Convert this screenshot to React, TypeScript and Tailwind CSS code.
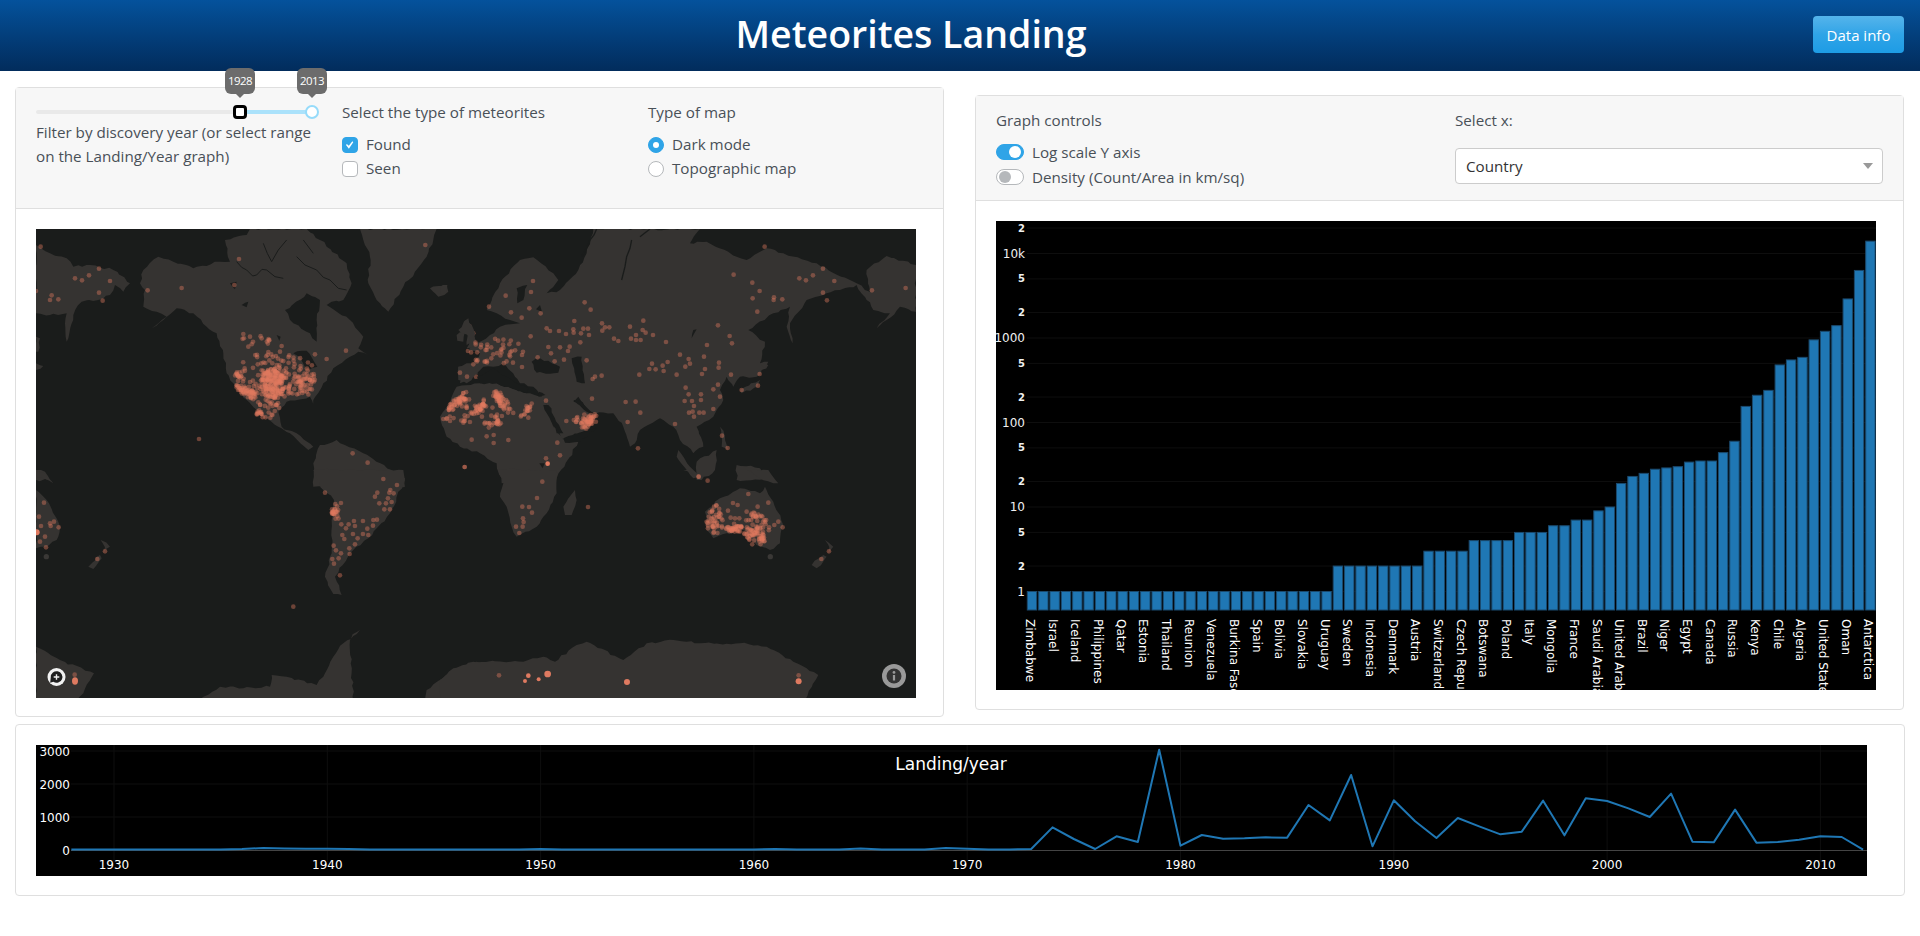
import React from 'react';

const LAND = '#353331';
const OCEAN = '#1a1c1b';
const DOT = '#df7a60';

// seeded so the scatter stays the same between runs
const seeded = (seed: number) => () => {
  seed = (seed * 16807) % 2147483647;
  return seed / 2147483647;
};

type Cluster = [number, number, number, number, number];

const scatter = (clusters: Cluster[], seed: number) => {
  const rnd = seeded(seed);
  const out: number[][] = [];
  clusters.forEach(([cx, cy, rx, ry, n]) => {
    for (let i = 0; i < n; i++) {
      const a = rnd() * Math.PI * 2;
      const r = Math.sqrt(rnd());
      out.push([cx + Math.cos(a) * r * rx, cy + Math.sin(a) * r * ry]);
    }
  });
  return out;
};

const parse = (points: string) => points.trim().split(/\s+/).map((p) => p.split(',').map(Number));

// dense dots along a line, overlapping into one solid patch
const trail = (points: string, n: number, spread: number, seed: number) => {
  const rnd = seeded(seed);
  const pts = parse(points);
  const out: number[][] = [];
  for (let i = 0; i < n; i++) {
    const t = rnd() * (pts.length - 1);
    const k = Math.min(Math.floor(t), pts.length - 2);
    const f = t - k;
    out.push([
      pts[k][0] + (pts[k + 1][0] - pts[k][0]) * f + (rnd() - 0.5) * spread,
      pts[k][1] + (pts[k + 1][1] - pts[k][1]) * f + (rnd() - 0.5) * spread,
    ]);
  }
  return out;
};

// breaks long edges up so the coasts are not straight
const rough = (points: string, seed: number) => {
  const rnd = seeded(seed);
  const pts = parse(points);
  const out: string[] = [];
  pts.forEach((p, i) => {
    const q = pts[(i + 1) % pts.length];
    const steps = Math.max(1, Math.round(Math.hypot(q[0] - p[0], q[1] - p[1]) / 14));
    for (let s = 0; s < steps; s++) {
      const j = s === 0 ? 0 : 7;
      const x = p[0] + ((q[0] - p[0]) * s) / steps + (rnd() - 0.5) * j;
      const y = p[1] + ((q[1] - p[1]) * s) / steps + (rnd() - 0.5) * j;
      out.push(`${x.toFixed(1)},${y.toFixed(1)}`);
    }
  });
  return out.join(' ');
};

const Shape = ({ points }: { points: string }) => <polygon points={rough(points, points.length * 97 + 13)} />;

const Dots = ({ pts }: { pts: number[][] }) => (
  <g fill={DOT} fillOpacity={0.42}>
    {pts.map(([x, y], i) => (
      <circle key={i} cx={x} cy={y} r={7} />
    ))}
  </g>
);

const nwDots = [[32,80],[627,117],[1186,75],[207,146],[177,166],[135,175],[156,181],[240,183],[353,211],[455,204],[207,218],[65,226],[60,240],[85,238],[218,242],[18,213],[613,195],[507,657],[968,700],[1013,728],[1060,775],[1304,741],[1325,659],[1370,650],[640,342],[660,350],[695,355],[655,380],[755,378],[750,395],[855,403],[890,417],[948,392],[1318,318],[1330,340],[1328,368],[1314,393],[1345,385],[1290,458],[1338,470]];
const neDots = [[279,183],[273,216],[197,227],[147,260],[213,277],[268,265],[245,293],[302,280],[434,247],[452,269],[403,303],[486,310],[610,302],[570,320],[508,322],[495,322],[487,332],[608,330],[617,338],[639,345],[320,325],[330,333],[357,333],[378,342],[400,328],[401,338],[423,340],[430,326],[444,326],[447,345],[421,367],[272,349],[522,356],[535,363],[573,356],[588,345],[588,360],[602,360],[678,366],[834,316],[869,348],[876,370],[801,375],[881,164],[937,188],[959,213],[938,235],[1002,232],[1001,240],[1027,238],[952,275],[974,80],[1078,175],[1098,181],[1119,166],[1149,146],[1183,183],[1149,218],[1161,241],[1296,211],[1397,204],[720,404],[746,417],[792,410],[750,431],[736,440],[795,447],[837,428],[836,443],[786,462],[873,464],[683,426],[636,431],[628,447],[647,448],[668,437],[671,453],[710,464],[598,464],[485,467],[465,470],[458,477],[440,421],[372,419],[344,424],[293,412],[325,381],[360,382],[389,380],[384,393],[333,400],[246,441],[219,428],[737,503],[746,523],[783,523],[783,540],[734,543],[756,543],[762,558],[820,508],[840,530],[834,494],[820,567],[747,578],[758,575],[778,578],[791,578],[762,590],[705,612],[601,578],[587,545],[557,546],[563,606],[456,536],[594,685],[846,647],[863,684],[905,510],[954,497],[959,462],[776,770],[74,741],[95,659],[140,649],[161,645],[161,669],[205,660],[352,668],[360,706],[318,715],[379,603],[60,458],[81,470],[100,433],[318,542],[265,593],[10,597],[30,603]];
const swDots = [[1060,27],[1101,45],[1042,68],[1035,80],[1081,60],[1078,68],[1091,70],[1074,85],[1085,96],[1048,100],[1068,100],[1063,118],[1080,118],[885,68],[916,102],[933,99],[934,163],[972,153],[999,153],[1030,150],[1041,149],[1029,167],[1012,176],[1015,195],[999,192],[948,175],[956,163],[975,168],[969,192],[937,195],[943,207],[983,205],[975,223],[958,235],[959,252],[911,227],[918,241],[933,250],[926,265],[907,267],[912,281],[930,316],[790,410],[42,98],[27,140],[33,168],[60,160],[72,155],[62,168],[86,172],[30,215],[45,200],[48,232],[202,267],[225,244],[134,614]];
const seDots = [[307,35],[291,84],[247,110],[267,111],[276,128],[249,145],[251,156],[228,170],[248,170],[238,189],[444,111],[776,20],[803,32],[177,616],[1076,616],[925,72],[985,98],[879,99],[893,105],[953,110],[1015,155],[1003,165],[1028,172],[864,122],[872,143],[885,145],[898,145],[920,125],[1144,267],[1167,244]];

const usDots = [
  ...scatter([[730,490,36,48,170],[740,465,125,72,110],[830,490,28,35,32],[780,500,40,45,30],[710,565,40,32,34],[680,362,45,18,10]], 71),
  ...trail('625,498 650,518 680,528', 55, 24, 5),
  ...trail('620,462 632,472', 10, 14, 9),
];
const euDots = [
  ...scatter([[170,395,85,42,42],[130,585,125,30,40],[425,600,35,20,14]], 113),
  ...trail('32,562 55,548 82,526', 50, 22, 17),
  ...trail('105,580 122,565 132,545', 34, 18, 23),
  ...trail('168,522 182,545 205,560', 50, 22, 29),
  ...trail('262,572 270,556', 12, 14, 31),
  ...trail('430,615 448,605 460,592', 42, 24, 37),
  ...trail('148,616 180,604', 14, 14, 41),
];
const auDots = [
  ...scatter([[825,150,26,45,45],[950,175,38,52,55]], 211),
  ...trail('865,184 885,172 905,178', 40, 22, 43),
  ...trail('920,190 955,180 970,213', 36, 22, 47),
];
const saBlob = trail('912,118 918,142', 22, 20, 53);

const WorldMap = () => (
  <svg width="880" height="469" viewBox="0 0 880 469" className="block">
    <rect width="880" height="469" fill={OCEAN} />

    {/* north west quarter */}
    <g transform="translate(-6,-9) scale(0.3333)">
      <g fill={LAND}>
        <Shape points="18,75 60,100 110,115 130,140 180,135 250,150 300,190 280,215 255,195 240,225 205,240 155,245 130,285 110,365 105,310 110,280 60,285 18,280" />
        <Shape points="340,150 385,110 430,125 490,145 570,125 600,125 585,60 650,45 660,27 830,27 870,60 950,130 965,190 940,240 905,245 890,255 960,300 1000,350 985,385 1015,405 985,395 960,410 910,445 880,490 850,540 855,570 840,530 770,545 745,575 755,620 800,640 850,680 835,690 780,640 745,620 700,590 650,540 610,490 590,460 580,400 560,340 530,320 490,280 440,265 400,300 365,325 410,290 380,275 340,260 345,210 330,190" />
        <Shape points="990,27 1220,27 1210,60 1190,110 1120,200 1075,275 1040,240 1015,190 1020,110 1000,60" />
        <Shape points="1200,205 1250,195 1255,215 1225,230" />
        <Shape points="1305,300 1325,320 1340,365 1310,375 1315,340" />
        <Shape points="1280,345 1305,335 1300,365 1282,362" />
        <Shape points="18,350 30,355 25,395 18,395" />
        <Shape points="18,430 40,438 18,450" />
        <Shape points="850,730 870,675 920,660 1000,700 1125,775 1125,800 850,800" />
        <Shape points="1285,440 1330,440 1345,460 1310,490 1285,480" />
        <Shape points="18,750 45,755 60,780 18,780" />
      </g>
      <g fill={OCEAN}>
        <Shape points="765,270 830,220 870,240 860,300 860,365 840,340 790,310" />
        <Shape points="790,400 830,392 862,440 830,452 810,412" />
        <Shape points="740,345 752,350 748,362" />
        <Shape points="635,255 655,245 650,262" />
        <Shape points="600,190 620,185 615,208" />
      </g>
      <g fill="none" stroke={OCEAN} strokeWidth="3">
        <polyline points="620,125 635,142 650,150 668,168 680,165 696,148 710,150 735,170 760,175" />
        <polyline points="700,70 712,100 725,125 745,90 770,60" />
        <polyline points="800,110 825,135 860,150 880,172 900,180 925,205 950,210" />
        <polyline points="820,60 850,100" />
      </g>
      <Dots pts={nwDots} />
      <Dots pts={usDots} />
    </g>

    {/* north east quarter */}
    <g transform="translate(404,-9) scale(0.3333)">
      <g fill={LAND}>
        <Shape points="140,270 180,190 240,120 280,112 340,160 355,180 320,220 360,210 415,150 440,100 460,27 780,27 750,70 800,65 890,110 920,120 980,85 1030,100 1130,130 1230,180 1250,190 1290,215 1280,150 1340,108 1428,135 1428,275 1380,260 1340,300 1310,325 1350,280 1300,270 1280,240 1250,195 1200,210 1100,240 1050,310 1058,370 1040,320 1050,260 1000,280 925,330 975,365 960,430 985,435 950,470 900,470 880,500 860,470 840,510 850,540 820,590 770,620 790,680 760,700 720,660 700,620 660,595 600,630 585,670 570,680 550,620 520,580 450,580 415,530 400,545 470,590 445,625 370,660 340,620 310,535 280,500 240,490 225,470 190,430 160,440 130,440 100,470 60,490 55,440 80,430 100,430 120,400 85,390 110,370 150,345 180,320 240,310 210,300 170,280" />
        <Shape points="0,590 20,560 50,500 120,490 170,490 260,520 310,530 340,620 370,660 415,665 350,775 345,790 185,790 170,730 120,700 60,680 20,650" />
        <Shape points="55,330 85,295 105,340 110,375 80,385 90,355" />
        <Shape points="0,200 22,195 20,215 0,228" />
        <Shape points="770,725 830,690 825,750 785,780 770,780" />
        <Shape points="890,735 960,745 1000,780 890,780" />
        <Shape points="715,690 750,740 780,770 760,775 710,710" />
        <Shape points="900,510 960,480 952,500 905,520" />
        <Shape points="960,430 985,425 975,445" />
        <Shape points="840,620 855,650 865,690 845,680" />
      </g>
      <g fill={OCEAN}>
        <Shape points="275,425 300,415 360,440 355,458 290,458" />
        <Shape points="395,415 425,410 435,490 410,485" />
        <Shape points="310,555 325,555 370,640 350,640" />
        <Shape points="370,655 470,622 420,665 375,668" />
        <Shape points="400,540 415,540 475,590 440,575" />
        <Shape points="110,470 160,445 230,490 265,505 260,520 170,490 120,490" />
        <Shape points="230,205 262,195 250,240 232,250" />
        <Shape points="300,255 306,275 288,268" />
        <Shape points="296,515 316,525 296,530" />
        <Shape points="760,330 770,328 755,355" />
        <Shape points="298,730 314,730 308,745" />
      </g>
      <g fill="none" stroke={OCEAN} strokeWidth="4">
        <polyline points="425,110 440,85 450,60 462,45 470,27" />
        <polyline points="545,180 555,140 560,110 570,85 575,60" />
        <polyline points="630,27 600,50" />
      </g>
      <Dots pts={neDots} />
      <Dots pts={euDots} />
      <circle cx="323" cy="731" r="7" fill={DOT} />
    </g>

    {/* south west quarter */}
    <g transform="translate(-6,241) scale(0.3333)">
      <g fill={LAND}>
        <Shape points="850,0 880,60 912,90 905,150 905,240 885,320 910,372 935,375 915,320 960,250 1015,205 1080,130 1125,30 1120,0" />
        <Shape points="18,60 50,90 90,170 80,210 50,230 18,235" />
        <Shape points="18,0 45,10 70,40 40,25 18,25" />
        <Shape points="175,290 210,255 215,265 190,297" />
        <Shape points="212,210 240,230 220,250 225,232" />
        <Shape points="18,530 90,570 192,610 160,670 140,690 18,690" />
        <Shape points="510,690 570,650 640,655 720,650 725,615 770,620 860,645 880,620 910,560 940,520 990,480 960,510 970,690" />
        <Shape points="1185,690 1190,660 1260,610 1340,575 1380,590 1380,690" />
      </g>
      <circle cx="49" cy="260" r="8" fill="#3a3836" />
      <Dots pts={swDots} />
      <Dots pts={saBlob} />
      <circle cx="20" cy="187" r="9" fill={DOT} />
      <ellipse cx="135" cy="633" rx="9" ry="11" fill={DOT} />
    </g>

    {/* south east quarter */}
    <g transform="translate(404,241) scale(0.3333)">
      <g fill={LAND}>
        <Shape points="175,0 350,0 350,70 320,130 290,170 230,200 215,170 200,110 180,80 190,40" />
        <Shape points="370,110 405,60 410,90 395,135 375,135" />
        <Shape points="795,125 840,85 900,55 960,70 975,50 1000,95 1030,165 1020,220 990,240 950,225 910,180 860,190 820,205 800,180" />
        <Shape points="1115,285 1150,255 1160,260 1130,295" />
        <Shape points="1155,210 1180,230 1165,250 1168,232" />
        <Shape points="0,630 40,595 100,575 250,575 310,560 345,575 410,525 440,515 550,570 620,520 700,510 780,520 900,520 980,530 1060,575 1135,615 1095,690 0,690" />
        <Shape points="920,0 985,0 1015,40 960,25" />
        <Shape points="730,0 745,0 760,15" />
      </g>
      <circle cx="991" cy="260" r="8" fill="#3a3836" />
      <Dots pts={seDots} />
      <Dots pts={auDots} />
      <g fill={DOT}>
        <circle cx="265" cy="617" r="7" />
        <circle cx="255" cy="633" r="6" />
        <circle cx="296" cy="628" r="6" />
        <circle cx="323" cy="612" r="10" />
        <circle cx="561" cy="636" r="9" />
        <circle cx="1076" cy="634" r="9" />
      </g>
    </g>

    {/* logo and info */}
    <circle cx="20.5" cy="448" r="9" fill="#f2f2f2" />
    <path d="M14.8 448a5.8 5.8 0 1 1 2.6 4.8l-3.2.9z" fill="#1f1f1f" />
    <path d="M20.5 445.2v5.6M17.7 448h5.6" stroke="#f2f2f2" strokeWidth="1.4" />
    <circle cx="858" cy="447" r="12" fill="#999999" />
    <circle cx="858" cy="447" r="7.5" fill="#333333" />
    <rect x="856.9" y="446" width="2.2" height="5.5" fill="#999999" />
    <circle cx="858" cy="443.4" r="1.4" fill="#999999" />
  </svg>
);

const yFor = (v: number) => 370.5 - Math.log10(v) * 84.5;

const counts = [
  ...Array(27).fill(1), ...Array(8).fill(2), ...Array(4).fill(3), ...Array(4).fill(4), ...Array(3).fill(5),
  6, 6, 7, 7, 9, 10, 19, 23, 25, 28, 29, 30, 34, 35, 35, 44, 60, 155, 210, 240, 480, 550, 590, 950, 1200, 1400, 2900, 6300, 14000,
];

const countries = ['Zimbabwe','Israel','Iceland','Philippines','Qatar','Estonia','Thailand','Reunion','Venezuela','Burkina Faso','Spain','Bolivia','Slovakia','Uruguay','Sweden','Indonesia','Denmark','Austria','Switzerland','Czech Republic','Botswana','Poland','Italy','Mongolia','France','Saudi Arabia','United Arab Emirates','Brazil','Niger','Egypt','Canada','Russia','Kenya','Chile','Algeria','United States','Oman','Antarctica'];

const yTicks: [number, string, boolean][] = [
  [20000,'2',false],[10000,'10k',true],[5000,'5',false],[2000,'2',false],[1000,'1000',true],[500,'5',false],[200,'2',false],[100,'100',true],[50,'5',false],[20,'2',false],[10,'10',true],[5,'5',false],[2,'2',false],[1,'1',true],
];

const PLOT_FONT = '"DejaVu Sans", Verdana, sans-serif';

const BarChart = () => (
  <svg width="880" height="469" viewBox="0 0 880 469" className="block bg-black" fontFamily={PLOT_FONT}>
    {yTicks.map(([v], i) => (
      <line key={i} x1="31" x2="880" y1={yFor(v)} y2={yFor(v)} stroke="#0e0e0e" />
    ))}
    {counts.map((v, i) => (
      <rect key={i} x={31.3 + i * 11.33} y={yFor(v)} width="9.4" height={389 - yFor(v)} fill="#1f77b4" stroke="#1b4a6e" strokeWidth="1" />
    ))}
    {yTicks.map(([v, label, major], i) => (
      <text key={i} x="29" y={yFor(v) + (major ? 4 : 3.5)} textAnchor="end" fontSize={major ? 12 : 10} fontWeight={major ? 400 : 700} fill="#f0f0f0">
        {label}
      </text>
    ))}
    {countries.map((name, i) => (
      <text key={name} transform={`translate(${30 + i * 22.66},398) rotate(90)`} fontSize="12" fill="#ffffff">
        {name}
      </text>
    ))}
  </svg>
);

// zoom-space y per year from 1973 on, turned into plot pixels below
const lateYears = [388,323,358,388,350,367,90,378,346,357,356,353,354,256,302,166,380,242,305,355,295,320,344,336,243,347,236,244,266,292,222,366,368,270,369,367,360,350,352,390];
const earlyBumps: Record<number, number> = { 1936: 1, 1937: 2, 1938: 1.5, 1939: 1.2, 1940: 1.2, 1941: 1, 1950: 1, 1961: 1, 1965: 1.5, 1969: 2, 1970: 1.2 };

const linePoints = () => {
  const pts: string[] = [];
  for (let y = 1928; y <= 2012; y++) {
    const py = y < 1973 ? 105 - (earlyBumps[y] ?? 0.5) : 105 + (lateYears[y - 1973] - 391) / 3;
    pts.push(`${78 + (y - 1930) * 21.33},${py}`);
  }
  return pts.join(' ');
};

const LineChart = () => (
  <svg width="1831" height="131" viewBox="0 0 1831 131" className="block bg-black" fontFamily={PLOT_FONT}>
    {[1930,1940,1950,1960,1970,1980,1990,2000,2010].map((y) => {
      const x = 78 + (y - 1930) * 21.33;
      return (
        <g key={y}>
          <line x1={x} x2={x} y1="0" y2="117" stroke="#0e0e0e" />
          <text x={x} y="124" textAnchor="middle" fontSize="12" fill="#ffffff">{y}</text>
        </g>
      );
    })}
    {[3000,2000,1000].map((v) => (
      <line key={v} x1="35" x2="1831" y1={105 - v * 0.033} y2={105 - v * 0.033} stroke="#0e0e0e" />
    ))}
    <line x1="35" x2="1831" y1="105.5" y2="105.5" stroke="#444444" />
    {[3000,2000,1000,0].map((v) => (
      <text key={v} x="34" y={110 - v * 0.033} textAnchor="end" fontSize="12" fill="#ffffff">{v}</text>
    ))}
    <polyline points={linePoints()} fill="none" stroke="#1f77b4" strokeWidth="2" strokeLinejoin="round" />
    <text x="915" y="25" textAnchor="middle" fontSize="17" fill="#ffffff">Landing/year</text>
  </svg>
);

const Bubble = ({ left, text }: { left: number; text: string }) => (
  <div className="absolute top-[-37px] flex flex-col items-center" style={{ left }}>
    <div className="w-[30px] h-[26px] rounded-[6px] bg-[#6c6c6c] text-white text-[11.5px] tracking-[-0.6px] leading-[26px] text-center">{text}</div>
    <div className="w-0 h-0 border-x-[4px] border-x-transparent border-t-[4px] border-t-[#6c6c6c]" />
  </div>
);

const YearSlider = () => (
  <div className="relative h-[14px] w-[281px] mt-[17px]">
    <div className="absolute left-0 right-0 top-[5px] h-[4px] rounded bg-[#e9e9e9]" />
    <div className="absolute left-[204px] right-[5px] top-[5px] h-[4px] bg-[#abe2fb]" />
    <div className="absolute left-[197px] top-0 w-[14px] h-[14px] rounded-[4px] bg-white border-[3px] border-black" />
    <div className="absolute left-[269px] top-0 w-[14px] h-[14px] rounded-full bg-white border-2 border-[#96dbfa]" />
    <Bubble left={189} text="1928" />
    <Bubble left={261} text="2013" />
  </div>
);

const CheckRow = ({ label, on }: { label: string; on?: boolean }) => (
  <div className="flex items-center h-6 gap-2">
    <span className={`w-4 h-4 rounded-[4px] flex items-center justify-center border ${on ? 'bg-[#2fa4e7] border-[#2fa4e7]' : 'bg-white border-[#b5b8bb]'}`}>
      {on && (
        <svg width="10" height="10" viewBox="0 0 8 8">
          <path d="M6.6.7 5.9.0 3 3.6 1.5 2.2.8 3l2.3 3z" fill="#fff" transform="translate(0,1)" />
        </svg>
      )}
    </span>
    <span className="mt-[-2px]">{label}</span>
  </div>
);

const RadioRow = ({ label, on }: { label: string; on?: boolean }) => (
  <div className="flex items-center h-6 gap-2">
    <span className={`w-4 h-4 rounded-full flex items-center justify-center border ${on ? 'bg-[#2fa4e7] border-[#2fa4e7]' : 'bg-white border-[#b5b8bb]'}`}>
      {on && <span className="w-[6px] h-[6px] rounded-full bg-white" />}
    </span>
    <span className="mt-[-2px]">{label}</span>
  </div>
);

const SwitchRow = ({ label, on }: { label: string; on?: boolean }) => (
  <div className="flex items-center h-[25px] gap-2">
    <span className={`w-7 h-4 rounded-full flex items-center border ${on ? 'bg-[#2fa4e7] border-[#2fa4e7] justify-end pr-[2px]' : 'bg-white border-[#b5b8bb] pl-[2px]'}`}>
      <span className={`w-3 h-3 rounded-full ${on ? 'bg-white' : 'bg-[#b5b8bb]'}`} />
    </span>
    {label}
  </div>
);

export default function App() {
  return (
    <div className="min-h-[936px] bg-white text-[#495057] text-[15.2px] leading-6" style={{ fontFamily: '"Open Sans", sans-serif' }}>
      <header className="relative h-[71px] flex items-center bg-gradient-to-b from-[#04529c] to-[#022c5c]">
        <h1 className="w-[1822px] text-center text-white text-[37.5px] font-semibold leading-none pb-[3px]">Meteorites Landing</h1>
        <button className="absolute left-[1813px] top-4 w-[91px] h-[37px] rounded-[4px] text-white text-[15px] bg-gradient-to-b from-[#54b4eb] via-[#2fa4e7] to-[#1d9ce5]">
          Data info
        </button>
      </header>

      <div className="px-[15px]">
        <div className="flex gap-[31px] items-start">
          {/* map card */}
          <div className="w-[929px] mt-4 rounded-[4px] border border-[#dfdfdf]">
            <div className="h-[121px] bg-[#f7f7f7] border-b border-[#dfdfdf] flex px-5">
              <div className="w-[306px]">
                <YearSlider />
                <div className="w-[290px] mt-[1px]">
                  Filter by discovery year (or select range on the Landing/Year graph)
                </div>
              </div>
              <div className="w-[306px] pt-[12px]">
                <div className="mb-[9px]">Select the type of meteorites</div>
                <CheckRow label="Found" on />
                <CheckRow label="Seen" />
              </div>
              <div className="pt-[12px]">
                <div className="mb-[9px]">Type of map</div>
                <RadioRow label="Dark mode" on />
                <RadioRow label="Topographic map" />
              </div>
            </div>
            <div className="px-5 pt-5 pb-[18px]">
              <WorldMap />
            </div>
          </div>

          {/* graph card */}
          <div className="w-[929px] mt-6 rounded-[4px] border border-[#dfdfdf]">
            <div className="h-[105px] bg-[#f7f7f7] border-b border-[#dfdfdf] flex px-5 pt-[12px]">
              <div className="w-[459px]">
                <div className="mb-[7px]">Graph controls</div>
                <SwitchRow label="Log scale Y axis" on />
                <SwitchRow label="Density (Count/Area in km/sq)" />
              </div>
              <div className="flex-1">
                <div className="mb-[16px]">Select x:</div>
                <div className="h-[36px] rounded-[4px] border border-[#ccc] bg-white flex items-center justify-between px-[10px] text-[#333]">
                  Country
                  <span className="w-0 h-0 border-x-[5px] border-x-transparent border-t-[6px] border-t-[#999] mr-[-1px]" />
                </div>
              </div>
            </div>
            <div className="px-5 pt-5 pb-[19px]">
              <BarChart />
            </div>
          </div>
        </div>

        {/* landing per year */}
        <div className="mt-[7px] h-[172px] rounded-[4px] border border-[#dfdfdf] px-5 pt-5">
          <LineChart />
        </div>
      </div>
    </div>
  );
}
